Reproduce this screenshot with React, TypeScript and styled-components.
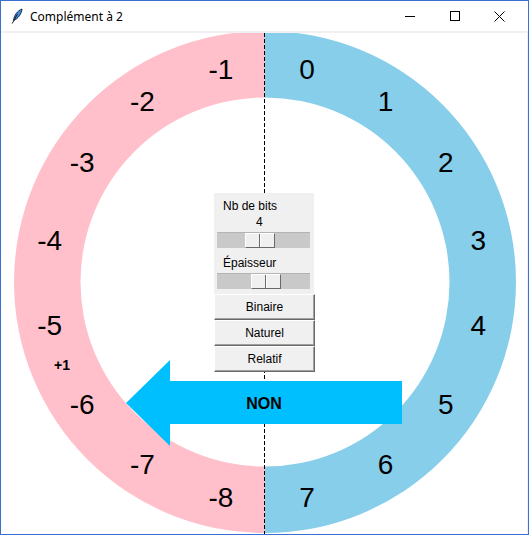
import React from "react";
import styled, { createGlobalStyle } from "styled-components";

const Global = createGlobalStyle`
  html, body { margin: 0; padding: 0; background: #fff; overflow: hidden; }
  #root { width: 529px; height: 535px; }
`;

const Window = styled.div`
  box-sizing: border-box;
  width: 529px;
  height: 535px;
  border: 1px solid #3a6fd1;
  display: flex;
  flex-direction: column;
  background: #fff;
  font-family: "Liberation Sans", Arial, sans-serif;
`;

const TitleBar = styled.div`
  height: 30px;
  flex: none;
  display: flex;
  align-items: center;
  background: #fff;
`;

const TitleIcon = styled.svg`
  margin-left: 10px;
  width: 12px;
  height: 16px;
  flex: none;
`;

const TitleText = styled.span`
  margin-left: 7px;
  flex: 1;
  font-family: "Segoe UI", "Noto Sans", sans-serif;
  font-size: 12px;
  color: #000;
`;

const Controls = styled.div`
  display: flex;
  height: 100%;
  margin-right: 6px;
`;

const ControlButton = styled.div`
  width: 45px;
  display: flex;
  align-items: center;
  justify-content: center;
`;

const Canvas = styled.div`
  position: relative;
  flex: 1;
  border-top: 2px solid #f0f0f0;
  border-right: 1px solid #f0f0f0;
  background: #fff;
  overflow: hidden;
`;

const Drawing = styled.svg`
  display: block;
  width: 526px;
  height: 501px;
`;

const Panel = styled.div`
  position: absolute;
  left: 213px;
  top: 160px;
  width: 101px;
  display: flex;
  flex-direction: column;
`;

const ControlBox = styled.div`
  width: 100px;
  height: 101px;
  box-sizing: border-box;
  background: #f0f0f0;
  padding-top: 6px;
  display: flex;
  flex-direction: column;
`;

const Label = styled.div<{ $gap?: number }>`
  margin-top: ${(p) => p.$gap ?? 0}px;
  padding-left: 9px;
  font-size: 12px;
  line-height: 15px;
  height: 15px;
  color: #000;
`;

const ValueRow = styled.div<{ $offset: number }>`
  margin-top: 1px;
  padding-left: ${(p) => p.$offset}px;
  font-size: 12px;
  line-height: 15px;
  height: 15px;
  color: #000;
`;

const Trough = styled.div`
  margin: 2px 0 0 3px;
  width: 93px;
  height: 16px;
  box-sizing: border-box;
  background: #c9c9c9;
  border-top: 1px solid #b4b4b4;
  display: flex;
`;

const Thumb = styled.div<{ $offset: number }>`
  position: relative;
  margin-left: ${(p) => p.$offset}px;
  width: 30px;
  box-sizing: border-box;
  background: #f0f0f0;
  border-style: solid;
  border-width: 1px;
  border-color: #ffffff #696969 #696969 #ffffff;
  &::after {
    content: "";
    position: absolute;
    left: 13px;
    top: 0;
    bottom: 0;
    width: 1px;
    background: #696969;
    border-right: 1px solid #ffffff;
  }
`;

const Button = styled.button`
  width: 101px;
  height: 26px;
  box-sizing: border-box;
  margin: 0;
  padding: 0;
  background: #f0f0f0;
  border-style: solid;
  border-width: 1px;
  border-color: #ffffff #696969 #696969 #ffffff;
  box-shadow: inset -1px -1px 0 #a0a0a0;
  font-family: "Liberation Sans", Arial, sans-serif;
  font-size: 12px;
  color: #000;
  text-align: center;
`;

const CX = 265;
const CY = 282;
const R_OUT = 251;
const R_IN = 184.5;
const R_MID = 218;

const rightHalf = `M ${CX} ${CY - R_OUT} A ${R_OUT} ${R_OUT} 0 0 1 ${CX} ${CY + R_OUT} L ${CX} ${CY + R_IN} A ${R_IN} ${R_IN} 0 0 0 ${CX} ${CY - R_IN} Z`;
const leftHalf = `M ${CX} ${CY - R_OUT} A ${R_OUT} ${R_OUT} 0 0 0 ${CX} ${CY + R_OUT} L ${CX} ${CY + R_IN} A ${R_IN} ${R_IN} 0 0 1 ${CX} ${CY - R_IN} Z`;

type Lab = { t: string; x: number; y: number };
const labels: Lab[] = [];
for (let k = 0; k < 8; k++) {
  const a = ((k + 0.5) * 22.5 * Math.PI) / 180;
  labels.push({ t: String(k), x: CX - 0.5 + R_MID * Math.sin(a), y: CY + 1.2 - R_MID * Math.cos(a) });
  labels.push({ t: String(-(k + 1)), x: CX - 1.5 - R_MID * Math.sin(a), y: CY + 1.2 - R_MID * Math.cos(a) });
}
const plusAngle = (112.5 * Math.PI) / 180;
const plus = { x: CX - 1.5 - R_MID * Math.sin(plusAngle), y: CY - R_MID * Math.cos(plusAngle) };

export default function App() {
  return (
    <>
      <Global />
      <Window>
        <TitleBar>
          <TitleIcon viewBox="0 0 12 16">
            <path d="M2.5 12.5 C 3 7.5, 6.5 2.5, 11 1 C 10.5 5.5, 7.5 10.5, 2.5 12.5 Z" fill="#3d8fe0" stroke="#0b1a33" strokeWidth="0.9" />
            <path d="M1.2 15.5 L 6.5 6" stroke="#0b1a33" strokeWidth="1" fill="none" />
          </TitleIcon>
          <TitleText>Complément à 2</TitleText>
          <Controls>
            <ControlButton>
              <svg width="10" height="10" viewBox="0 0 10 10">
                <line x1="0" y1="5.5" x2="10" y2="5.5" stroke="#000" strokeWidth="1" />
              </svg>
            </ControlButton>
            <ControlButton>
              <svg width="10" height="10" viewBox="0 0 10 10">
                <rect x="0.5" y="0.5" width="9" height="9" fill="none" stroke="#000" strokeWidth="1" />
              </svg>
            </ControlButton>
            <ControlButton>
              <svg width="11" height="11" viewBox="0 0 11 11">
                <path d="M0.5 0.5 L10.5 10.5 M10.5 0.5 L0.5 10.5" stroke="#000" strokeWidth="1" />
              </svg>
            </ControlButton>
          </Controls>
        </TitleBar>
        <Canvas>
          <Drawing viewBox="1 33 526 501">
            <path d={leftHalf} fill="#FFC0CB" />
            <path d={rightHalf} fill="#87CEEB" />
            <line x1="264.5" y1="33" x2="264.5" y2="534" stroke="#000" strokeWidth="1" strokeDasharray="4 2" />
            {labels.map((l) => (
              <text
                key={l.t}
                x={l.x}
                y={l.y}
                textAnchor="middle"
                dominantBaseline="central"
                fontFamily="'Liberation Sans', Arial, sans-serif"
                fontSize="28"
                fill="#000"
              >
                {l.t}
              </text>
            ))}
            <text
              x={plus.x}
              y={plus.y}
              textAnchor="middle"
              dominantBaseline="central"
              fontFamily="'Liberation Sans', Arial, sans-serif"
              fontSize="14"
              fontWeight="bold"
              fill="#000"
            >
              +1
            </text>
            <polygon
              points="402,381 170,381 170,360 126,403 170,446 170,424 402,424"
              fill="#00BFFF"
            />
            <text
              x="264"
              y="403"
              textAnchor="middle"
              dominantBaseline="central"
              fontFamily="'Liberation Sans', Arial, sans-serif"
              fontSize="16"
              fontWeight="bold"
              fill="#000"
            >
              NON
            </text>
          </Drawing>
          <Panel>
            <ControlBox>
              <Label>Nb de bits</Label>
              <ValueRow $offset={42}>4</ValueRow>
              <Trough>
                <Thumb $offset={28} />
              </Trough>
              <Label $gap={8}>Épaisseur</Label>
              <Trough>
                <Thumb $offset={34} />
              </Trough>
            </ControlBox>
            <Button>Binaire</Button>
            <Button>Naturel</Button>
            <Button>Relatif</Button>
          </Panel>
        </Canvas>
      </Window>
    </>
  );
}
